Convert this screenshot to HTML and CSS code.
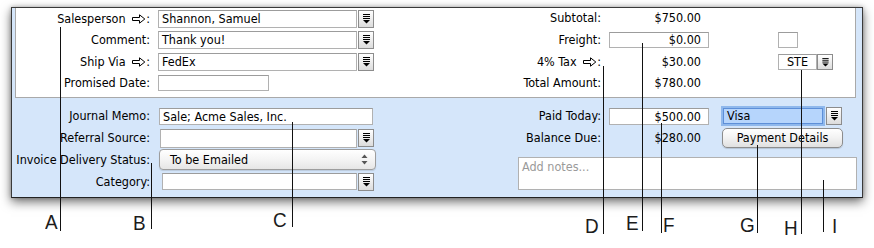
FILE: index.html
```html
<!DOCTYPE html>
<html lang="en">
<head>
  <meta charset="UTF-8">
  <title>Sale</title>
  <link rel="stylesheet" href="styles.css">
</head>
<body>
  <svg class="defs" width="0" height="0">
    <symbol id="arr" viewBox="0 0 14 10">
      <path d="M0.5 3.5H7.5V0.8L12.8 5L7.5 9.2V6.5H0.5Z" fill="none" stroke="#000" stroke-width="1"/>
    </symbol>
    <symbol id="lst" viewBox="0 0 7 10">
      <rect x="0" y="0" width="7" height="1"/>
      <rect x="0" y="2" width="7" height="1"/>
      <rect x="0" y="4" width="7" height="1"/>
      <path d="M0 6H7L3.5 9.5Z"/>
    </symbol>
  </svg>

  <div class="window">
    <div class="top">
      <div class="lbl">Salesperson <svg class="arrow"><use href="#arr"/></svg>:</div>
      <div class="fld combo">
        <div class="box wide">Shannon, Samuel</div>
        <span class="drop"><svg><use href="#lst"/></svg></span>
      </div>
      <div class="rlbl up">Subtotal:</div>
      <div class="val up">$750.00</div>

      <div class="lbl">Comment:</div>
      <div class="fld combo">
        <div class="box wide">Thank you!</div>
        <span class="drop"><svg><use href="#lst"/></svg></span>
      </div>
      <div class="rlbl">Freight:</div>
      <div class="val"><div class="box num">$0.00</div></div>
      <div class="ext"><div class="box tiny"></div></div>

      <div class="lbl">Ship Via <svg class="arrow"><use href="#arr"/></svg>:</div>
      <div class="fld combo">
        <div class="box wide">FedEx</div>
        <span class="drop"><svg><use href="#lst"/></svg></span>
      </div>
      <div class="rlbl">4% Tax <svg class="arrow"><use href="#arr"/></svg>:</div>
      <div class="val">$30.00</div>
      <div class="ext combo">
        <div class="box code">STE</div>
        <span class="drop small"><svg><use href="#lst"/></svg></span>
      </div>

      <div class="lbl">Promised Date:</div>
      <div class="fld"><div class="box date"></div></div>
      <div class="rlbl">Total Amount:</div>
      <div class="val">$780.00</div>
    </div>

    <div class="bottom">
      <div class="lbl">Journal Memo:</div>
      <div class="fld"><div class="box memo">Sale; Acme Sales, Inc.</div></div>
      <div class="rlbl">Paid Today:</div>
      <div class="val"><div class="box num paid">$500.00</div></div>
      <div class="ext combo">
        <div class="box focus">Visa</div>
        <span class="drop"><svg><use href="#lst"/></svg></span>
      </div>

      <div class="lbl">Referral Source:</div>
      <div class="fld combo shift1">
        <div class="box list">&nbsp;</div>
        <span class="drop"><svg><use href="#lst"/></svg></span>
      </div>
      <div class="rlbl">Balance Due:</div>
      <div class="val">$280.00</div>
      <div class="ext"><button class="btn">Payment Details</button></div>

      <div class="lbl">Invoice Delivery Status:</div>
      <div class="fld">
        <div class="popup">
          <span>To be Emailed</span>
          <svg class="updown" viewBox="0 0 7 11"><path d="M3.5 0.5L6.5 4H0.5Z"/><path d="M0.5 7H6.5L3.5 10.5Z"/></svg>
        </div>
      </div>
      <div class="notes">Add notes...</div>

      <div class="lbl">Category:</div>
      <div class="fld combo shift4">
        <div class="box cat">&nbsp;</div>
        <span class="drop"><svg><use href="#lst"/></svg></span>
      </div>
    </div>
  </div>

  <div class="callouts">
    <div class="line ln-a"></div><span class="tag tg-a">A</span>
    <div class="line ln-b"></div><span class="tag tg-b">B</span>
    <div class="line ln-c"></div><span class="tag tg-c">C</span>
    <div class="line ln-d"></div><span class="tag tg-d">D</span>
    <div class="line ln-e"></div><span class="tag tg-e">E</span>
    <div class="line ln-f"></div><span class="tag tg-f">F</span>
    <div class="line ln-g"></div><span class="tag tg-g">G</span>
    <div class="line ln-h"></div><span class="tag tg-h">H</span>
    <div class="line ln-i"></div><span class="tag tg-i">I</span>
  </div>
</body>
</html>
```

FILE: styles.css
```css
body {
  margin: 0;
  width: 874px;
  height: 248px;
  position: relative;
  overflow: hidden;
  background: #fff;
  color: #000;
  font-family: "DejaVu Sans Condensed", "DejaVu Sans", sans-serif;
  font-stretch: condensed;
  font-size: 12.5px;
  line-height: 16px;
}
.defs { position: absolute; }

.window {
  box-sizing: border-box;
  width: 852px;
  height: 191px;
  margin: 7px 0 0 11px;
  padding: 0 6px 0 3px;
  border: 1px solid #3a3a3a;
  border-bottom-color: #222;
  background: #d5e6fa;
  box-shadow: 0 4px 10px rgba(0, 0, 0, 0.55), 0 0 4px rgba(0, 0, 0, 0.25);
}

.top {
  box-sizing: border-box;
  height: 90px;
  padding-top: 1px;
  background: #fff;
  border: 1px solid #a9a9a9;
  border-top: 0;
  display: grid;
  grid-template-columns: 142px 216px 235px 169px 60px;
  grid-template-rows: 20px 22px 22px 20px;
}
.bottom {
  padding: 7px 0 0 1px;
  display: grid;
  grid-template-columns: 142px 216px 235px 112px 136px;
  grid-template-rows: 22px 22px 21px 23px;
}

.lbl, .rlbl, .val, .fld, .ext { align-self: center; white-space: nowrap; }
.lbl { grid-column: 1; text-align: right; padding-right: 8px; }
.fld { grid-column: 2; }
.rlbl { grid-column: 3; text-align: right; padding-right: 8px; }
.val { grid-column: 4; }
.ext { grid-column: 5; }
.top .val { width: 100px; box-sizing: border-box; text-align: right; padding-right: 8px; }
.bottom .val { width: 100px; box-sizing: border-box; text-align: right; padding-right: 8px; }
.top .val .box, .bottom .val .box { margin-right: -7px; }
.up { margin-top: -3px; }

.arrow {
  width: 14px;
  height: 10px;
  margin: 0 0 0 3px;
  vertical-align: -1px;
}

.combo { display: flex; align-items: center; }
.box {
  box-sizing: border-box;
  height: 18px;
  padding: 0 3px;
  line-height: 16px;
  border: 1px solid #b1b1b1;
  border-top-color: #9c9c9c;
  background: #fff;
  overflow: hidden;
}
.wide { width: 201px; }
.date { width: 111px; height: 16px; }
.num { width: 100px; height: 16px; line-height: 14px; text-align: right; padding-right: 7px; }
.paid { height: 17px; line-height: 15px; }
.tiny { width: 20px; height: 16px; }
.code { width: 39px; height: 16px; line-height: 14px; text-align: center; }
.memo { width: 214px; height: 17px; line-height: 15px; margin-left: 1px; }
.list { width: 198px; height: 19px; }
.cat { width: 195px; height: 17px; }
.shift1 { margin-left: 2px; }
.shift4 { margin-left: 4px; }

.drop {
  box-sizing: border-box;
  width: 16px;
  height: 18px;
  margin-left: 1px;
  border: 1px solid #8c8c8c;
  background: linear-gradient(#ffffff, #dcdcdc);
  display: flex;
  align-items: center;
  justify-content: center;
}
.drop svg { width: 7px; height: 10px; fill: #000; }
.drop.small { height: 16px; margin-left: 0; }
.drop.small svg { height: 9px; }

.focus {
  width: 100px;
  height: 16px;
  line-height: 14px;
  margin-left: 2px;
  background: #b6d5fc;
  border: 1px solid #5d8fd8;
  box-shadow: 0 0 0 2px #8fb8ec;
}
.bottom .ext .drop { margin-left: 3px; height: 18px; }

.popup {
  box-sizing: border-box;
  width: 217px;
  height: 21px;
  margin-left: 1px;
  padding: 0 7px 0 10px;
  border: 1px solid #9d9d9d;
  border-radius: 4px;
  background: linear-gradient(#ffffff, #f4f4f4 50%, #e6e6e6);
  box-shadow: 0 1px 1px rgba(0, 0, 0, 0.12);
  display: flex;
  align-items: center;
  justify-content: space-between;
}
.updown { width: 7px; height: 11px; fill: #555; }

.btn {
  box-sizing: border-box;
  width: 121px;
  height: 20px;
  margin: 0 0 0 1px;
  padding: 0;
  font: inherit;
  color: #000;
  border: 1px solid #8d8d8d;
  border-radius: 5px;
  background: linear-gradient(#ffffff, #f2f2f2 50%, #e0e0e0);
  box-shadow: 0 1px 1px rgba(0, 0, 0, 0.15);
}

.notes {
  grid-column: 3 / -1;
  grid-row: 3 / 5;
  box-sizing: border-box;
  height: 33px;
  margin: 8px 0 0 144px;
  padding: 1px 3px;
  border: 1px solid #b1b1b1;
  background: #fff;
  color: #9a9a9a;
}

.callouts { position: absolute; left: 0; top: 0; width: 874px; height: 248px; }
.line { position: absolute; width: 1px; background: #111; }
.tag {
  position: absolute;
  font-family: "Liberation Sans", Arial, sans-serif;
  font-size: 21px;
  line-height: 21px;
  color: #1c1c1c;
  transform: scaleX(0.9);
  transform-origin: left top;
}
.ln-a { left: 60px; top: 27px; height: 204px; }
.ln-b { left: 151px; top: 163px; height: 66px; }
.ln-c { left: 292px; top: 122px; height: 105px; }
.ln-d { left: 603px; top: 66px; height: 168px; }
.ln-e { left: 642px; top: 43px; height: 188px; }
.ln-f { left: 661px; top: 123px; height: 110px; }
.ln-g { left: 757px; top: 145px; height: 88px; }
.ln-h { left: 801px; top: 70px; height: 164px; }
.ln-i { left: 823px; top: 180px; height: 52px; }
.tg-a { left: 45px; top: 211px; }
.tg-b { left: 133px; top: 212px; }
.tg-c { left: 273px; top: 209px; }
.tg-d { left: 585px; top: 215px; }
.tg-e { left: 626px; top: 212px; }
.tg-f { left: 663px; top: 214px; }
.tg-g { left: 740px; top: 214px; }
.tg-h { left: 784px; top: 217px; }
.tg-i { left: 832px; top: 215px; }
```
